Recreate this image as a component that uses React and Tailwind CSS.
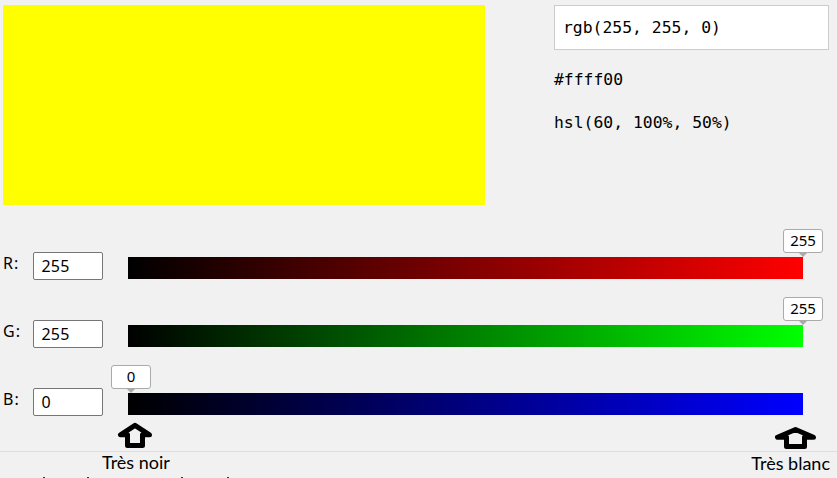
const channels = [
  { label: "R:", value: 255, bar: "from-black to-[#ff0000]", tip: "left-full" },
  { label: "G:", value: 255, bar: "from-black to-[#00ff00]", tip: "left-full" },
  { label: "B:", value: 0, bar: "from-black to-[#0000ff]", tip: "left-[3px]" },
];

function Channel({ label, value, bar, tip }) {
  return (
    <div className="flex h-7 items-start">
      <span className="w-[30px] text-[16px] leading-[23px] tracking-[1px]">{label}</span>
      <div className="h-7 w-[70px] rounded-[2px] border border-[#767676] bg-white pl-[7.5px] text-[16px] leading-[27px] tracking-[0.2px]">
        {value}
      </div>
      <div className={`relative ml-[25px] mt-[5px] h-[22px] w-[675px] bg-linear-to-r/srgb ${bar}`}>
        <div className={`absolute bottom-full -ml-5 flex flex-col items-center ${tip}`}>
          <div className="h-6 w-10 rounded-[3px] border border-[#aaaaaa] bg-white text-center text-[15px] leading-[21px]">
            {value}
          </div>
          <svg className="h-[4px] w-[8px]" viewBox="0 0 8 4">
            <path d="M0 0H8L4 4Z" fill="#aaaaaa" />
          </svg>
        </div>
      </div>
    </div>
  );
}

export default function App() {
  return (
    <div className="flex h-[478px] w-[837px] flex-col overflow-hidden bg-[#f1f1f1] pt-[5px] font-['Noto_Sans',sans-serif] text-black">
      <div className="flex items-start justify-between pl-[3px] pr-2">
        <div className="h-[200px] w-[482px] bg-[#ffff00]" />
        <div className="flex w-[275px] flex-col gap-[19px] font-['DejaVu_Sans_Mono',monospace] text-[16.4px] leading-6">
          <div className="-mb-px flex h-[45px] items-center border border-[#cccccc] bg-white px-2">rgb(255, 255, 0)</div>
          <div>#ffff00</div>
          <div>hsl(60, 100%, 50%)</div>
        </div>
      </div>
      <div className="flex flex-col gap-10 pl-[3px] pt-[47px]">
        {channels.map((channel) => (
          <Channel key={channel.label} {...channel} />
        ))}
      </div>
      <div className="flex h-[35px] shrink-0 items-end justify-between pb-px pl-[117px] pr-[19px]">
        <svg width="36" height="28" viewBox="0 0 36 28">
          <path d="M18 3.3L3.5 12.8H10.5V23.5H25.5V12.8H32.5Z" fill="#f1f1f1" stroke="#000" strokeWidth="5" strokeLinejoin="round" />
        </svg>
        <svg width="44" height="26" viewBox="0 0 44 26">
          <path d="M21.5 5.5L3.5 13.3H12.5V22.5H30.5V13.3H39.5Z" fill="#f1f1f1" stroke="#000" strokeWidth="5" strokeLinejoin="round" />
        </svg>
      </div>
      <div className="flex h-[26px] shrink-0 items-start justify-between whitespace-nowrap border-t border-[#dddddd] pl-[102px] pr-[7px] font-['Lato',sans-serif] text-[18px] leading-5">
        <span>Très noir</span>
        <span className="pt-px">Très blanc</span>
      </div>
      <div className="flex h-px shrink-0 pl-[43px]">
        <span className="mr-[42px] w-[2px] bg-[#333355]" />
        <span className="mr-[92px] w-[2px] bg-[#333355]" />
        <span className="mr-[44px] w-[2px] bg-[#333355]" />
        <span className="w-[2px] bg-[#333355]" />
      </div>
    </div>
  );
}
